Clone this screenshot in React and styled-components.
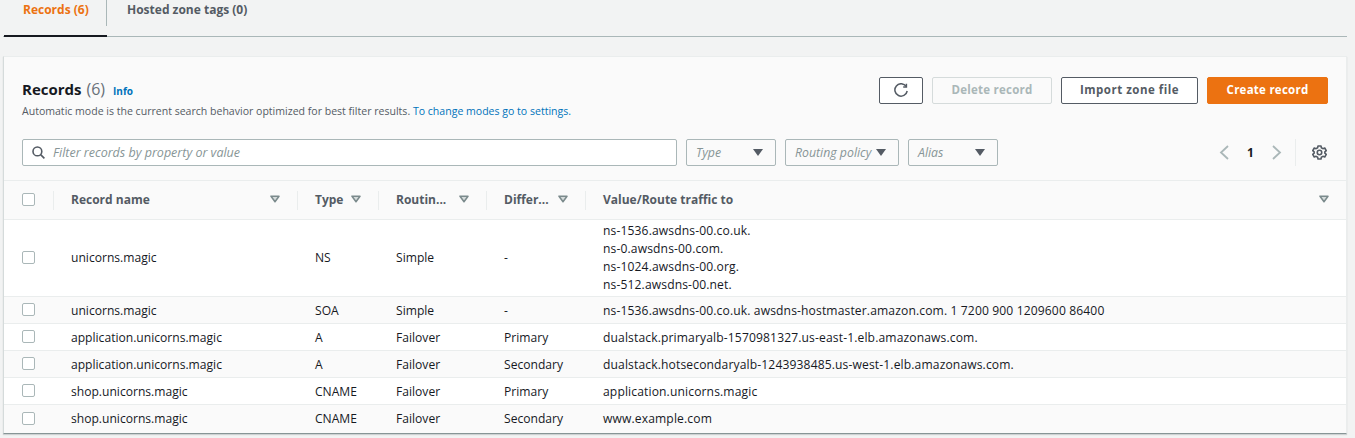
import React from "react";
import styled, { createGlobalStyle } from "styled-components";

const Global = createGlobalStyle`
  html, body { margin: 0; padding: 0; background: #f2f3f3; }
  body { font-family: "Open Sans", "Noto Sans", sans-serif; color: #16191f; width: 1355px; height: 438px; overflow: hidden; }
  * { box-sizing: border-box; }
`;

const Page = styled.div`
  padding: 0 8px 0 3px;
`;
const Tabs = styled.div`
  display: flex;
  height: 37px;
  border-bottom: 1px solid #aab7b8;
  margin-bottom: 19px;
`;
const Tab = styled.div`
  height: 37px;
  margin-left: ${p => (p.$active ? "1px" : "0")};
  width: ${p => (p.$active ? "103px" : "auto")};
  padding: ${p => (p.$active ? "0 0 0 19px" : "0 20px")};
  border-bottom: ${p => (p.$active ? "2px solid #16191f" : "none")};
  color: ${p => (p.$active ? "#ec7211" : "#545b64")};
  font-size: 12px;
  font-weight: 700;
  line-height: 20px;
  position: relative;
  &::after {
    content: "";
    display: ${p => (p.$active ? "block" : "none")};
    position: absolute;
    right: 0;
    top: 0;
    height: 26px;
    width: 1px;
    background: #aab7b8;
  }
`;
const Card = styled.section`
  background: #fafafa;
  border: 1px solid #eaeded;
  border-bottom: 1px solid #879596;
  border-left: 1px solid #d5dbdb;
  height: 378px;
  box-shadow: 0 1px 1px rgba(0, 28, 36, 0.15);
`;
const Head = styled.div`
  display: flex;
  justify-content: space-between;
  align-items: flex-start;
  padding: 20px 18px 0 18px;
  height: 82px;
`;
const TitleRow = styled.div`
  display: flex;
  align-items: baseline;
  gap: 8px;
  margin-top: 1px;
`;
const Title = styled.h2`
  margin: 0;
  font-size: 15px;
  line-height: 22px;
  font-weight: 700;
  color: #16191f;
  span { font-weight: 400; color: #687078; font-size: 16px; margin-left: 1px; }
`;
const InfoLink = styled.a`
  font-size: 10px;
  font-weight: 700;
  color: #0073bb;
`;
const Desc = styled.p`
  margin: 4px 0 0;
  font-size: 10.55px;
  line-height: 14px;
  color: #545b64;
  a { color: #0073bb; }
`;
const Actions = styled.div`
  display: flex;
  gap: 9px;
`;
const Button = styled.button`
  height: 27px;
  width: ${p => p.$w}px;
  padding: 0 0 2px;
  border-radius: 2px;
  border: 1px solid ${p => (p.$primary ? "#ec7211" : p.$disabled ? "#d5dbdb" : "#545b64")};
  background: ${p => (p.$primary ? "#ec7211" : p.$disabled ? "#fafafa" : "#fff")};
  color: ${p => (p.$primary ? "#fff" : p.$disabled ? "#aab7b8" : "#545b64")};
  font: 700 11.5px "Open Sans", sans-serif;
  letter-spacing: ${p => p.$ls ?? 0.25}px;
  display: flex;
  align-items: center;
  justify-content: center;
`;
const Filters = styled.div`
  display: flex;
  align-items: center;
  height: 27px;
  padding-left: 18px;
  gap: 9px;
`;
const Search = styled.div`
  width: 655px;
  height: 27px;
  background: #fff;
  border: 1px solid #aab7b8;
  border-radius: 2px;
  display: flex;
  align-items: center;
  padding-left: 9px;
  gap: 8px;
  font-size: 12.5px;
  font-style: italic;
  color: #879596;
`;
const Select = styled.div`
  width: ${p => p.$w}px;
  height: 27px;
  border: 1px solid #aab7b8;
  border-radius: 2px;
  background: #fafafa;
  display: flex;
  align-items: center;
  justify-content: space-between;
  padding: 0 12px 0 9px;
  font-size: 12.3px;
  font-style: italic;
  white-space: nowrap;
  color: #879596;
`;
const Caret = styled.i`
  width: 0;
  height: 0;
  flex: none;
  border-left: 5px solid transparent;
  border-right: 5px solid transparent;
  border-top: 7px solid #545b64;
`;
const Pager = styled.div`
  margin-left: auto;
  display: flex;
  align-items: center;
  height: 27px;
  padding-right: 19px;
`;
const PageNum = styled.span`
  font-size: 12px;
  font-weight: 700;
  width: 43px;
  text-align: center;
  color: #16191f;
`;
const PagerDivider = styled.span`
  width: 1px;
  height: 27px;
  background: #eaeded;
  margin: 0 16px 0 13px;
`;
const Table = styled.div`
  margin-top: 14px;
`;
const COLUMNS = "49px 244px 81px 108px 99px 1fr";
const HeaderRow = styled.div`
  display: grid;
  grid-template-columns: ${COLUMNS};
  height: 40px;
  align-items: center;
  background: #fafafa;
  border-top: 1px solid #eaeded;
  border-bottom: 1px solid #eaeded;
`;
const HeadCell = styled.div`
  height: 19px;
  display: flex;
  align-items: center;
  justify-content: ${p => (p.$spread ? "space-between" : "flex-start")};
  gap: 8px;
  padding: 0 ${p => p.$pr ?? 17}px 2px 17px;
  border-left: 1px solid #eaeded;
  font-size: 12px;
  font-weight: 700;
  color: #545b64;
  white-space: nowrap;
`;
const Cell = styled.div`
  font-size: 12.1px;
  line-height: 18px;
  color: #16191f;
  padding-left: 18px;
  white-space: nowrap;
`;
const ValueCell = styled(Cell)`
  letter-spacing: 0.13px;
`;
const Row = styled.div`
  display: grid;
  grid-template-columns: ${COLUMNS};
  height: ${p => p.$h}px;
  align-items: center;
  background: ${p => (p.$alt ? "#fafafa" : "#fff")};
  border-bottom: ${p => (p.$last ? "none" : "1px solid #eaeded")};
  ${Cell}, ${ValueCell} {
    padding-top: ${p => (p.$nudge ? 2 : 0)}px;
  }
`;
const CheckCell = styled.div`
  padding: 0 0 1px 18px;
  display: flex;
  align-items: center;
`;
const Checkbox = styled.span`
  display: block;
  width: 13px;
  height: 13px;
  border: 1px solid #aab7b8;
  border-radius: 2px;
  background: #fff;
`;

const SortIcon = () => (
  <svg width="10" height="8" viewBox="0 0 10 8" style={{ flex: "none" }}>
    <path d="M1 1.2h8L5 6.8z" fill="#d5dbdb" stroke="#7b8a8c" strokeWidth="1.5" strokeLinejoin="round" />
  </svg>
);
const SearchIcon = () => (
  <svg width="13" height="13" viewBox="0 0 13 13" fill="none" stroke="#545b64" strokeWidth="1.6">
    <circle cx="5.4" cy="5.4" r="4.4" />
    <path d="M8.6 8.6L12.4 12.4" />
  </svg>
);
const RefreshIcon = () => (
  <svg width="16" height="16" viewBox="0 0 16 16" fill="none" stroke="#545b64" strokeWidth="1.5" style={{ marginTop: 2 }}>
    <path d="M13.2 3.4A6.2 6.2 0 1 0 14.2 8" />
    <path d="M13.4 0.8v3.2h-3.2" />
  </svg>
);
const Chevron = ({ dir }) => (
  <svg width="10" height="15" viewBox="0 0 10 15" fill="none" stroke="#aab7b8" strokeWidth="1.8">
    <path d={dir === "left" ? "M9 1L2 7.5L9 14" : "M1 1L8 7.5L1 14"} />
  </svg>
);
const GearIcon = () => (
  <svg width="15" height="15" viewBox="0 0 16 16" fill="none" stroke="#545b64" strokeWidth="1.7" strokeLinejoin="round">
    <path d="M6.4 1h3.2l.4 2 1.6.9 2-.7 1.6 2.8-1.5 1.3v1.4l1.5 1.3-1.6 2.8-2-.7-1.6.9-.4 2H6.4l-.4-2-1.6-.9-2 .7L.8 10l1.5-1.3V7.3L.8 6l1.6-2.8 2 .7 1.6-.9z" />
    <circle cx="8" cy="8" r="2.4" />
  </svg>
);

const rows = [
  { h: 77, name: "unicorns.magic", type: "NS", route: "Simple", diff: "-", value: ["ns-1536.awsdns-00.co.uk.", "ns-0.awsdns-00.com.", "ns-1024.awsdns-00.org.", "ns-512.awsdns-00.net."] },
  { h: 27, nudge: true, alt: true, name: "unicorns.magic", type: "SOA", route: "Simple", diff: "-", value: ["ns-1536.awsdns-00.co.uk. awsdns-hostmaster.amazon.com. 1 7200 900 1209600 86400"] },
  { h: 27, nudge: true, name: "application.unicorns.magic", type: "A", route: "Failover", diff: "Primary", value: ["dualstack.primaryalb-1570981327.us-east-1.elb.amazonaws.com."] },
  { h: 27, nudge: true, alt: true, name: "application.unicorns.magic", type: "A", route: "Failover", diff: "Secondary", value: ["dualstack.hotsecondaryalb-1243938485.us-west-1.elb.amazonaws.com."] },
  { h: 27, nudge: true, name: "shop.unicorns.magic", type: "CNAME", route: "Failover", diff: "Primary", value: ["application.unicorns.magic"] },
  { h: 27, alt: true, last: true, name: "shop.unicorns.magic", type: "CNAME", route: "Failover", diff: "Secondary", value: ["www.example.com"] },
];

export default function App() {
  return (
    <Page>
      <Global />
      <Tabs>
        <Tab $active>Records (6)</Tab>
        <Tab>Hosted zone tags (0)</Tab>
      </Tabs>
      <Card>
        <Head>
          <div>
            <TitleRow>
              <Title>Records <span>(6)</span></Title>
              <InfoLink>Info</InfoLink>
            </TitleRow>
            <Desc>
              Automatic mode is the current search behavior optimized for best filter results. <a>To change modes go to settings.</a>
            </Desc>
          </div>
          <Actions>
            <Button $w={44} aria-label="Refresh"><RefreshIcon /></Button>
            <Button $w={120} $disabled>Delete record</Button>
            <Button $w={137} $ls={0.5}>Import zone file</Button>
            <Button $w={121} $primary>Create record</Button>
          </Actions>
        </Head>
        <Filters>
          <Search><SearchIcon />Filter records by property or value</Search>
          <Select $w={90}>Type<Caret /></Select>
          <Select $w={114}>Routing policy<Caret /></Select>
          <Select $w={90}>Alias<Caret /></Select>
          <Pager>
            <Chevron dir="left" />
            <PageNum>1</PageNum>
            <Chevron dir="right" />
            <PagerDivider />
            <GearIcon />
          </Pager>
        </Filters>
        <Table>
          <HeaderRow>
            <CheckCell><Checkbox /></CheckCell>
            <HeadCell $spread>Record name<SortIcon /></HeadCell>
            <HeadCell>Type<SortIcon /></HeadCell>
            <HeadCell $spread>Routin...<SortIcon /></HeadCell>
            <HeadCell $spread>Differ...<SortIcon /></HeadCell>
            <HeadCell $spread>Value/Route traffic to<SortIcon /></HeadCell>
          </HeaderRow>
          {rows.map((r, i) => (
            <Row key={i} $h={r.h} $alt={r.alt} $last={r.last} $nudge={r.nudge}>
              <CheckCell><Checkbox /></CheckCell>
              <Cell>{r.name}</Cell>
              <Cell>{r.type}</Cell>
              <Cell>{r.route}</Cell>
              <Cell>{r.diff}</Cell>
              <ValueCell>{r.value.map(v => <div key={v}>{v}</div>)}</ValueCell>
            </Row>
          ))}
        </Table>
      </Card>
    </Page>
  );
}
